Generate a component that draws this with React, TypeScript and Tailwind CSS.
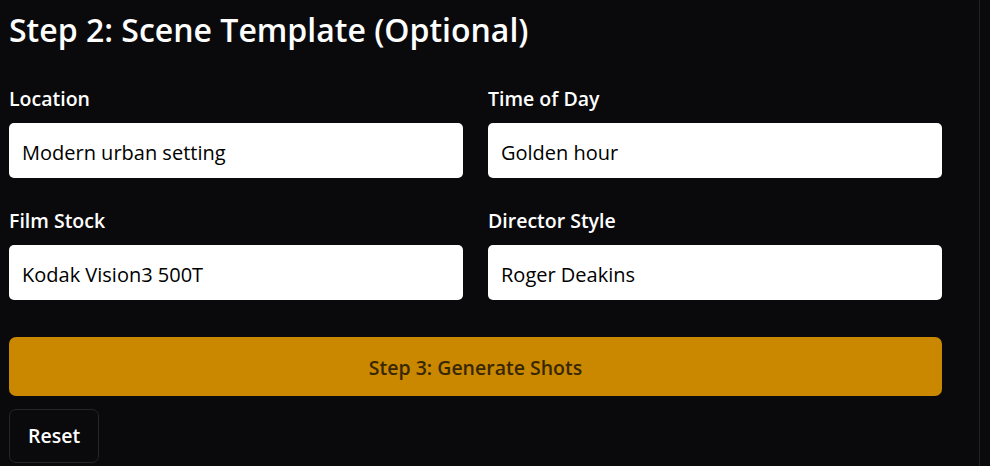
const fields = [
  { label: 'Location', value: 'Modern urban setting' },
  { label: 'Time of Day', value: 'Golden hour' },
  { label: 'Film Stock', value: 'Kodak Vision3 500T' },
  { label: 'Director Style', value: 'Roger Deakins' },
]

export default function App() {
  return (
    <div
      className="flex min-h-screen bg-[#0a0a0c]"
      style={{ fontFamily: "'Open Sans', 'Noto Sans', sans-serif" }}
    >
      <div className="w-[980px] shrink-0 border-r border-[#222226] pl-[9px] pr-[37px]">
        <h2 className="mt-[6px] text-[32px] leading-[48px] font-semibold text-white">
          Step 2: Scene Template (Optional)
        </h2>

        <div className="mt-[31px] grid grid-cols-2 gap-x-[25px] gap-y-[29px]">
          {fields.map((f) => (
            <div key={f.label}>
              <label className="block text-[19.5px] leading-[27px] font-semibold text-white">
                {f.label}
              </label>
              <input
                readOnly
                value={f.value}
                className="mt-[11px] block h-[55px] w-full rounded-[5px] bg-white px-[13px] pt-[3px] text-[20px] text-black outline-none"
              />
            </div>
          ))}
        </div>

        <button className="mt-[37px] block h-[59px] w-full rounded-[7px] bg-[#c98800] pt-[3px] text-[19.5px] font-semibold text-[#382700]">
          Step 3: Generate Shots
        </button>

        <button className="mt-[13px] block h-[54px] rounded-[7px] border border-[#26262a] px-[18px] text-[19.5px] font-semibold text-white">
          Reset
        </button>
      </div>
    </div>
  )
}
